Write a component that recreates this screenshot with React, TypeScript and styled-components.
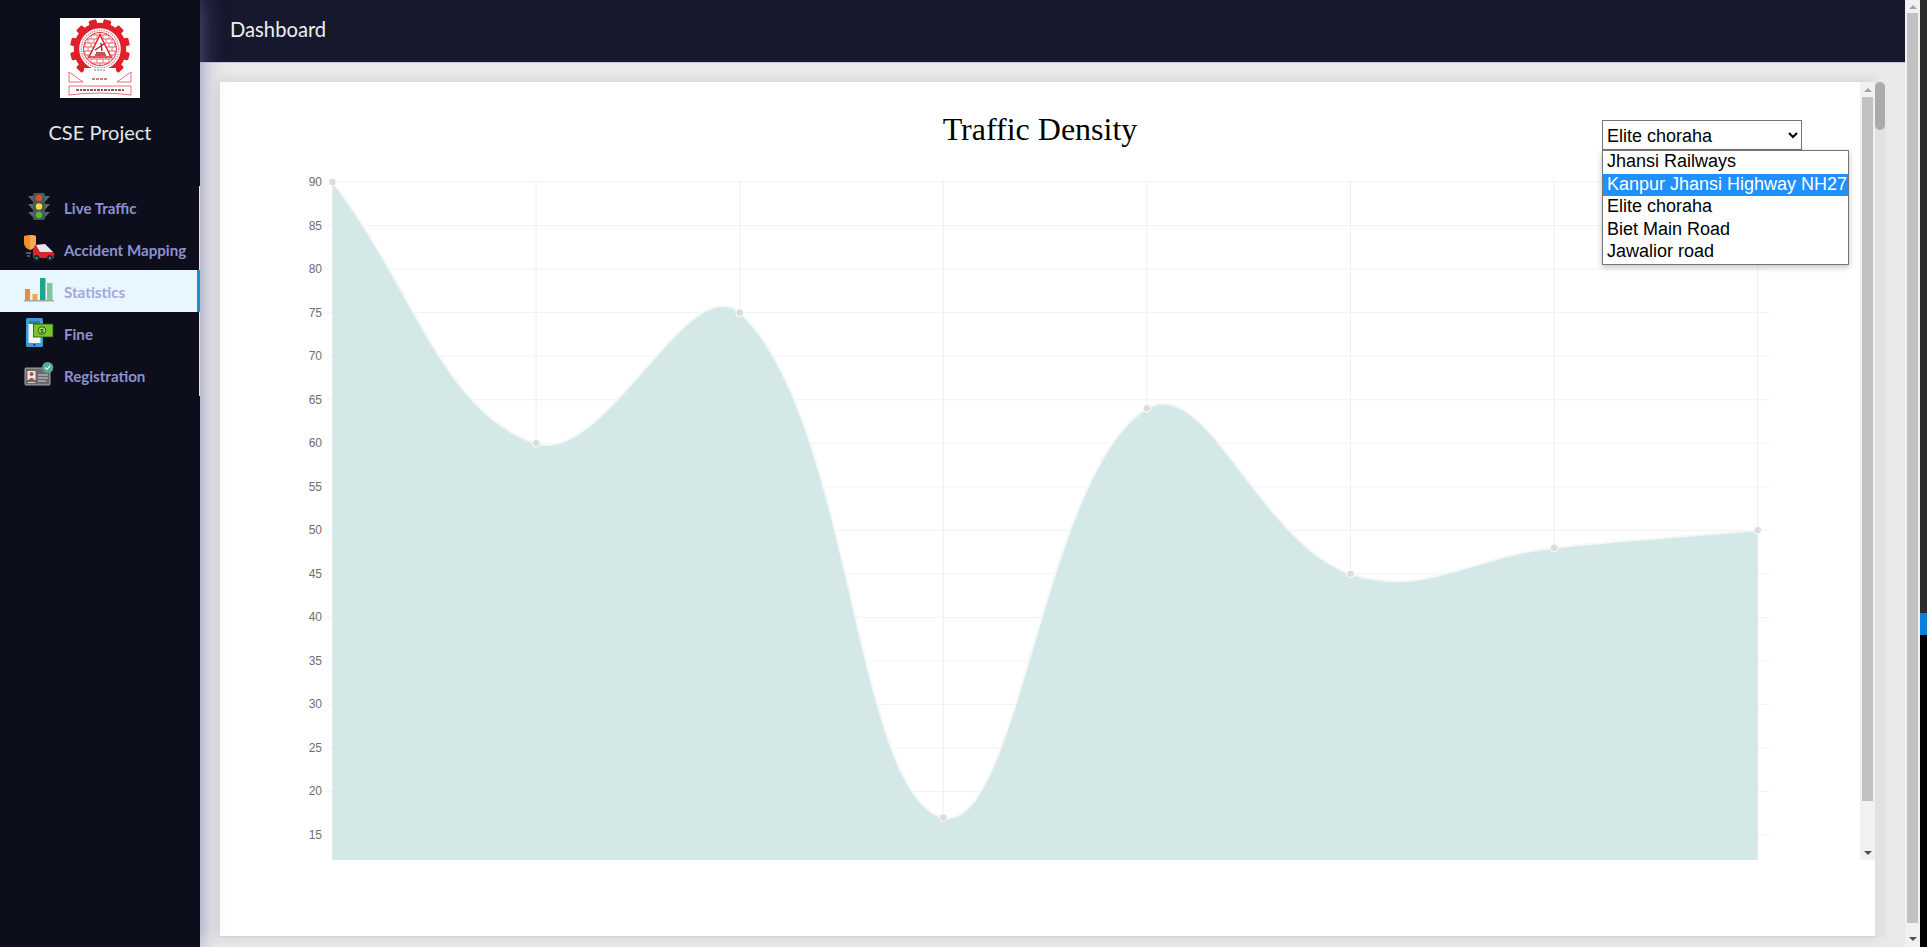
import React from "react";
import styled, { createGlobalStyle } from "styled-components";

const Global = createGlobalStyle`
  html, body { margin: 0; padding: 0; height: 100%; overflow: hidden; background: #e9e9e9; }
  * { box-sizing: border-box; }
`;

const Page = styled.div`
  display: flex;
  width: 1927px;
  height: 947px;
  font-family: "Lato", "Liberation Sans", sans-serif;
`;

const Sidebar = styled.aside`
  position: relative;
  z-index: 2;
  flex: 0 0 200px;
  display: flex;
  flex-direction: column;
  align-items: center;
  background: #0d0e1c;
  padding-top: 18px;
  box-shadow: 0 0 22px rgba(110, 110, 165, 0.75);
`;

const LogoFrame = styled.div`
  width: 80px;
  height: 80px;
  background: #fff;
  filter: blur(0.35px);
`;

const Brand = styled.div`
  margin-top: 19px;
  font-size: 20px;
  line-height: 30px;
  color: #e6e6e6;
`;

const Nav = styled.nav`
  align-self: stretch;
  margin-top: 39px;
  border-right: 1px solid #e6e6e6;
`;

const NavRow = styled.div<{ $active?: boolean }>`
  display: flex;
  align-items: center;
  gap: 10px;
  height: 42px;
  padding-left: 24px;
  background: ${(p) => (p.$active ? "#e8f6ff" : "transparent")};
  box-shadow: ${(p) => (p.$active ? "inset -3px 0 0 #1b8ed6" : "none")};
  margin-right: ${(p) => (p.$active ? "-1px" : "0")};
  color: ${(p) => (p.$active ? "#a3a7da" : "#8d90cf")};
  font-size: 15.12px;
  font-weight: 700;
`;

const NavIcon = styled.svg`
  flex: 0 0 30px;
  width: 30px;
  height: 30px;
  overflow: visible;
`;

const NavLabel = styled.span`
  position: relative;
  top: 1px;
  white-space: nowrap;
`;

const Main = styled.div`
  flex: 1;
  min-width: 0;
  display: flex;
  flex-direction: column;
`;

const TopBar = styled.header`
  flex: 0 0 63px;
  display: flex;
  align-items: center;
  padding-left: 30px;
  padding-bottom: 4px;
  background: #16182e;
  border-bottom: 1px solid #c9c9cf;
  color: #eeeeee;
  font-size: 20.2px;
`;

const Body = styled.div`
  flex: 1;
  display: flex;
  padding: 19px 0 10px 20px;
  background: #e9e9e9;
`;

const Card = styled.section`
  flex: 0 0 1655px;
  display: flex;
  align-items: flex-start;
  background: #fff;
  border-bottom: 1px solid #d4d4d4;
  box-shadow: 0 0 12px rgba(0, 0, 0, 0.12);
`;

const ChartPane = styled.div`
  flex: 0 0 1640px;
  display: flex;
  flex-direction: column;
`;

const ChartHeader = styled.div`
  display: grid;
  grid-template-columns: 1fr auto 1fr;
  height: 68px;
  padding-top: 29px;
`;

const Title = styled.h1`
  grid-column: 2;
  margin: 0;
  font-family: "Liberation Serif", "Times New Roman", serif;
  font-size: 32px;
  font-weight: 400;
  line-height: 36px;
  color: #000;
`;

const PickerWrap = styled.div`
  grid-column: 3;
  justify-self: end;
  position: relative;
  width: 200px;
  height: 30px;
  margin: 9px 58px 0 0;
`;

const Picker = styled.select`
  display: block;
  width: 200px;
  height: 30px;
  padding-top: 1px;
  font-family: "Liberation Sans", Arial, sans-serif;
  font-size: 18px;
  color: #000;
  background: #fff;
  border: 1px solid #767676;
  border-radius: 0;
`;

const Popup = styled.ul`
  position: absolute;
  top: 30px;
  left: 0;
  width: 247px;
  height: 115px;
  margin: 0;
  padding: 0;
  list-style: none;
  background: #fff;
  border: 1px solid #767676;
  box-shadow: 0 2px 6px rgba(0, 0, 0, 0.25);
  z-index: 3;
`;

const PopupOption = styled.li<{ $hover?: boolean }>`
  height: 22.6px;
  line-height: 21px;
  padding-left: 4px;
  font-family: "Liberation Sans", Arial, sans-serif;
  font-size: 18px;
  white-space: nowrap;
  color: ${(p) => (p.$hover ? "#fff" : "#000")};
  background: ${(p) => (p.$hover ? "#1e90ff" : "#fff")};
`;

const ChartSvg = styled.svg`
  display: block;
  width: 1640px;
  height: 718px;
`;

const AxisLabel = styled.text`
  font-family: "Liberation Sans", Arial, sans-serif;
  font-size: 12px;
  fill: #6e6e6e;
`;

const ScrollRail = styled.div<{ $height: string }>`
  flex: 0 0 15px;
  width: 15px;
  height: ${(p) => p.$height};
  display: flex;
  flex-direction: column;
  align-items: center;
  background: #f1f1f1;
`;

const ArrowBox = styled.div<{ $size: number }>`
  flex: 0 0 ${(p) => p.$size}px;
  display: flex;
  align-items: center;
  justify-content: center;
`;

const Arrow = styled.i<{ $down?: boolean; $dark?: boolean }>`
  display: block;
  width: 0;
  height: 0;
  border-left: 4px solid transparent;
  border-right: 4px solid transparent;
  ${(p) =>
    p.$down
      ? `border-top: 4px solid ${p.$dark ? "#505050" : "#a3a3a3"};`
      : `border-bottom: 4px solid ${p.$dark ? "#505050" : "#a3a3a3"};`}
`;

const RailThumb = styled.div<{ $height: number }>`
  flex: 0 0 ${(p) => p.$height}px;
  width: 11px;
  background: #c1c1c1;
`;

const RailSpace = styled.div`
  flex: 1;
`;

const Gutter = styled.div`
  flex: 0 0 10px;
  background: #e2e2e2;
  border-radius: 5px 5px 0 0;
`;

const GutterThumb = styled.div`
  height: 48px;
  background: #ababab;
  border-radius: 5px;
`;

const Strip = styled.div`
  flex: 0 0 7px;
  display: flex;
  flex-direction: column;
  background: #000;
`;

const StripTop = styled.div`
  height: 613px;
  background: #2c2c2c;
`;

const StripMark = styled.div`
  height: 22px;
  background: #0a80d8;
`;

const values = [90, 60, 75, 17, 64, 45, 48, 50];
const ticks = [90, 85, 80, 75, 70, 65, 60, 55, 50, 45, 40, 35, 30, 25, 20, 15];
const toY = (v: number) => 182 + (90 - v) * 8.707;
const pts = values.map((v, i) => ({ x: 332.5 + i * 203.6, y: toY(v) }));

function buildCurve() {
  const t = 0.4;
  const cps = pts.map((c, i) => {
    const p = pts[i - 1] ?? c;
    const n = pts[i + 1] ?? c;
    const d01 = Math.hypot(c.x - p.x, c.y - p.y);
    const d12 = Math.hypot(n.x - c.x, n.y - c.y);
    const s = d01 + d12 || 1;
    const fa = (t * d01) / s;
    const fb = (t * d12) / s;
    return {
      inX: c.x - fa * (n.x - p.x),
      inY: c.y - fa * (n.y - p.y),
      outX: c.x + fb * (n.x - p.x),
      outY: c.y + fb * (n.y - p.y),
    };
  });
  let d = `M${pts[0].x} ${pts[0].y}`;
  for (let i = 1; i < pts.length; i++) {
    d += ` C${cps[i - 1].outX} ${cps[i - 1].outY} ${cps[i].inX} ${cps[i].inY} ${pts[i].x} ${pts[i].y}`;
  }
  return d;
}

const curve = buildCurve();
const last = pts[pts.length - 1];
const area = `${curve} L${last.x} 860 L${pts[0].x} 860 Z`;

function Chart() {
  return (
    <ChartSvg viewBox="220 150 1640 718">
      {ticks.map((v) => (
        <g key={v}>
          <line x1={327} x2={1770} y1={toY(v)} y2={toY(v)} stroke="#f3f3f3" />
          <AxisLabel x={322} y={toY(v) + 4} textAnchor="end">
            {v}
          </AxisLabel>
        </g>
      ))}
      {pts.map((p, i) => (
        <line key={i} x1={p.x} x2={p.x} y1={180} y2={860} stroke="#efefef" />
      ))}
      <path d={area} fill="#d4e8e8" />
      <path d={curve} fill="none" stroke="#f4f8f8" strokeWidth={2} />
      {pts.map((p, i) => (
        <circle key={i} cx={p.x} cy={p.y} r={3.9} fill="#dcdcdc" stroke="#fff" strokeWidth={1} />
      ))}
    </ChartSvg>
  );
}

function Logo() {
  const cy = 31;
  const teeth = Array.from({ length: 12 }, (_, i) => i * 30 + 15);
  const bricks: React.ReactNode[] = [];
  for (let r = 0; r < 9; r++) {
    const y = cy - 18 + r * 4;
    bricks.push(<line key={`h${r}`} x1={22} x2={58} y1={y} y2={y} stroke="#df2630" strokeWidth={0.7} />);
    for (let c = 0; c < 7; c++) {
      const x = 22 + c * 6 + (r % 2) * 3;
      bricks.push(<line key={`v${r}-${c}`} x1={x} x2={x} y1={y} y2={y + 4} stroke="#df2630" strokeWidth={0.6} />);
    }
  }
  return (
    <svg viewBox="0 0 80 80" width={80} height={80}>
      <defs>
        <clipPath id="brickClip">
          <circle cx={40} cy={cy} r={16.5} />
        </clipPath>
      </defs>
      {teeth.map((a) => (
        <rect key={a} x={36} y={cy - 30} width={8} height={7} rx={1.5} fill="#df2029" transform={`rotate(${a} 40 ${cy})`} />
      ))}
      <circle cx={40} cy={cy} r={23.5} fill="none" stroke="#df2029" strokeWidth={5.5} />
      <circle cx={40} cy={cy} r={18.7} fill="none" stroke="#d0868c" strokeWidth={1.6} strokeDasharray="1.2 1.2" />
      <g clipPath="url(#brickClip)">{bricks}</g>
      <circle cx={40} cy={cy} r={16.5} fill="none" stroke="#df2630" strokeWidth={0.9} />
      <path d="M40 17 L51 39 H29 Z" fill="#fff" stroke="#df2630" strokeWidth={1.5} />
      <path d="M35 32 L44 26 M41 25 L42 33 M35 37 H46 M36 35 H45" stroke="#a8202a" strokeWidth={1.4} fill="none" />
      <rect x={24} y={50} width={32} height={14} fill="#fff" />
      <path d="M34 52 H46" stroke="#b9656c" strokeWidth={1.2} strokeDasharray="2 1" />
      <path d="M9 54 L23 64 H9 Z M71 54 L57 64 H71 Z" fill="#fff" stroke="#d9505a" strokeWidth={0.8} />
      <path d="M9 68 H71 V77 Q40 73 9 77 Z" fill="#fff" stroke="#d9505a" strokeWidth={0.8} />
      <path d="M32 61 H48" stroke="#c0545c" strokeWidth={1.4} strokeDasharray="3 1" />
      <path d="M16 72 H64" stroke="#8a5a5e" strokeWidth={1.8} strokeDasharray="3 1 2 1" />
    </svg>
  );
}

const TrafficIcon = () => (
  <NavIcon viewBox="0 0 30 30">
    <path d="M4 4H10V11Z M26 4H20V11Z M4 12H10V19Z M26 12H20V19Z M4 20H10V26Z M26 20H20V26Z" fill="#566a6c" />
    <rect x={9} y={1} width={12} height={27} rx={2} fill="#465a5c" />
    <circle cx={15} cy={6} r={3.2} fill="#e5492f" />
    <circle cx={15} cy={14.5} r={3.2} fill="#f6dc3c" />
    <circle cx={15} cy={23} r={3.2} fill="#58b732" />
  </NavIcon>
);

const AccidentIcon = () => (
  <NavIcon viewBox="0 0 30 30">
    <path d="M0 2 Q6 0 12 2 V9 Q12 14 6 16 Q0 14 0 9 Z" fill="#ef8f2e" />
    <path d="M6 1 Q9 1 12 2 V9 Q12 14 6 16 Z" fill="#f5ad52" />
    <path d="M2 19H7M3 22H6" stroke="#9aa0a6" strokeWidth={1} />
    <path d="M11 11 L21 10 L30 19 V24 H9 V16 Z" fill="#d9252c" />
    <path d="M12 11 L21 10 L29 18 H16 Z" fill="#dfe9ef" />
    <circle cx={12.5} cy={24} r={3} fill="#1c2c3a" />
    <circle cx={26} cy={24} r={3} fill="#1c2c3a" />
    <circle cx={12.5} cy={24} r={1.1} fill="#7f8c99" />
    <circle cx={26} cy={24} r={1.1} fill="#7f8c99" />
  </NavIcon>
);

const StatsIcon = () => (
  <NavIcon viewBox="0 0 30 30">
    <rect x={1} y={13} width={5} height={11} fill="#ee8a3c" />
    <rect x={8.5} y={18} width={5} height={6} fill="#f3a34a" />
    <rect x={16} y={2} width={5.5} height={22} fill="#1fa58a" />
    <rect x={23} y={7} width={5.5} height={17} fill="#7fc79a" />
    <rect x={0} y={24} width={30} height={1.5} fill="#a9a9a0" />
  </NavIcon>
);

const FineIcon = () => (
  <NavIcon viewBox="0 0 30 30">
    <rect x={2} y={0} width={17} height={29} rx={1.5} fill="#3d9bd9" />
    <rect x={4.5} y={3} width={12} height={22} fill="#f3f5f5" />
    <rect x={4.5} y={3} width={12} height={3} fill="#2e7f8f" />
    <circle cx={10.5} cy={27} r={0.9} fill="#123" />
    <rect x={9.5} y={6} width={19.5} height={13} fill="#7ac628" stroke="#2c4d12" strokeWidth={0.8} />
    <circle cx={18} cy={12.5} r={3.8} fill="#a6dd5a" stroke="#24460f" strokeWidth={0.9} />
    <text x={18} y={14.8} textAnchor="middle" fontSize={6} fontFamily="Liberation Sans" fill="#24460f">$</text>
  </NavIcon>
);

const RegistrationIcon = () => (
  <NavIcon viewBox="0 0 30 30">
    <rect x={1} y={8} width={25} height={17} rx={1} fill="#6a6a6c" stroke="#c4c4c4" strokeWidth={0.8} />
    <rect x={3.5} y={11} width={8} height={9} fill="#f2e8e2" />
    <circle cx={7.5} cy={14} r={2} fill="#b5533c" />
    <path d="M4.5 20 Q7.5 15.5 10.5 20 Z" fill="#b5533c" />
    <path d="M14 15H24M14 18H24M14 21H22M4 22.5H11" stroke="#d2d2d2" strokeWidth={1} />
    <circle cx={23.7} cy={7.5} r={5.6} fill="#5aa98c" />
    <path d="M21.2 7.5 L23 9.3 L26.3 5.7" fill="none" stroke="#f2f7f4" strokeWidth={1.2} />
  </NavIcon>
);

const navItems = [
  { label: "Live Traffic", Icon: TrafficIcon },
  { label: "Accident Mapping", Icon: AccidentIcon },
  { label: "Statistics", Icon: StatsIcon, active: true },
  { label: "Fine", Icon: FineIcon },
  { label: "Registration", Icon: RegistrationIcon },
];

const locations = [
  "Jhansi Railways",
  "Kanpur Jhansi Highway NH27",
  "Elite choraha",
  "Biet Main Road",
  "Jawalior road",
];

export default function App() {
  return (
    <Page>
      <Global />
      <Sidebar>
        <LogoFrame>
          <Logo />
        </LogoFrame>
        <Brand>CSE Project</Brand>
        <Nav>
          {navItems.map(({ label, Icon, active }) => (
            <NavRow key={label} $active={active}>
              <Icon />
              <NavLabel>{label}</NavLabel>
            </NavRow>
          ))}
        </Nav>
      </Sidebar>
      <Main>
        <TopBar>Dashboard</TopBar>
        <Body>
          <Card>
            <ChartPane>
              <ChartHeader>
                <Title>Traffic Density</Title>
                <PickerWrap>
                  <Picker defaultValue="Elite choraha">
                    {locations.map((l) => (
                      <option key={l}>{l}</option>
                    ))}
                  </Picker>
                  <Popup>
                    {locations.map((l, i) => (
                      <PopupOption key={l} $hover={i === 1}>
                        {l}
                      </PopupOption>
                    ))}
                  </Popup>
                </PickerWrap>
              </ChartHeader>
              <Chart />
            </ChartPane>
            <ScrollRail $height="778px">
              <ArrowBox $size={15}>
                <Arrow />
              </ArrowBox>
              <RailThumb $height={704} />
              <RailSpace />
              <ArrowBox $size={15}>
                <Arrow $down $dark />
              </ArrowBox>
            </ScrollRail>
          </Card>
          <Gutter>
            <GutterThumb />
          </Gutter>
        </Body>
      </Main>
      <ScrollRail $height="947px">
        <ArrowBox $size={13}>
          <Arrow />
        </ArrowBox>
        <RailThumb $height={910} />
        <RailSpace />
        <ArrowBox $size={17}>
          <Arrow $down $dark />
        </ArrowBox>
      </ScrollRail>
      <Strip>
        <StripTop />
        <StripMark />
      </Strip>
    </Page>
  );
}
